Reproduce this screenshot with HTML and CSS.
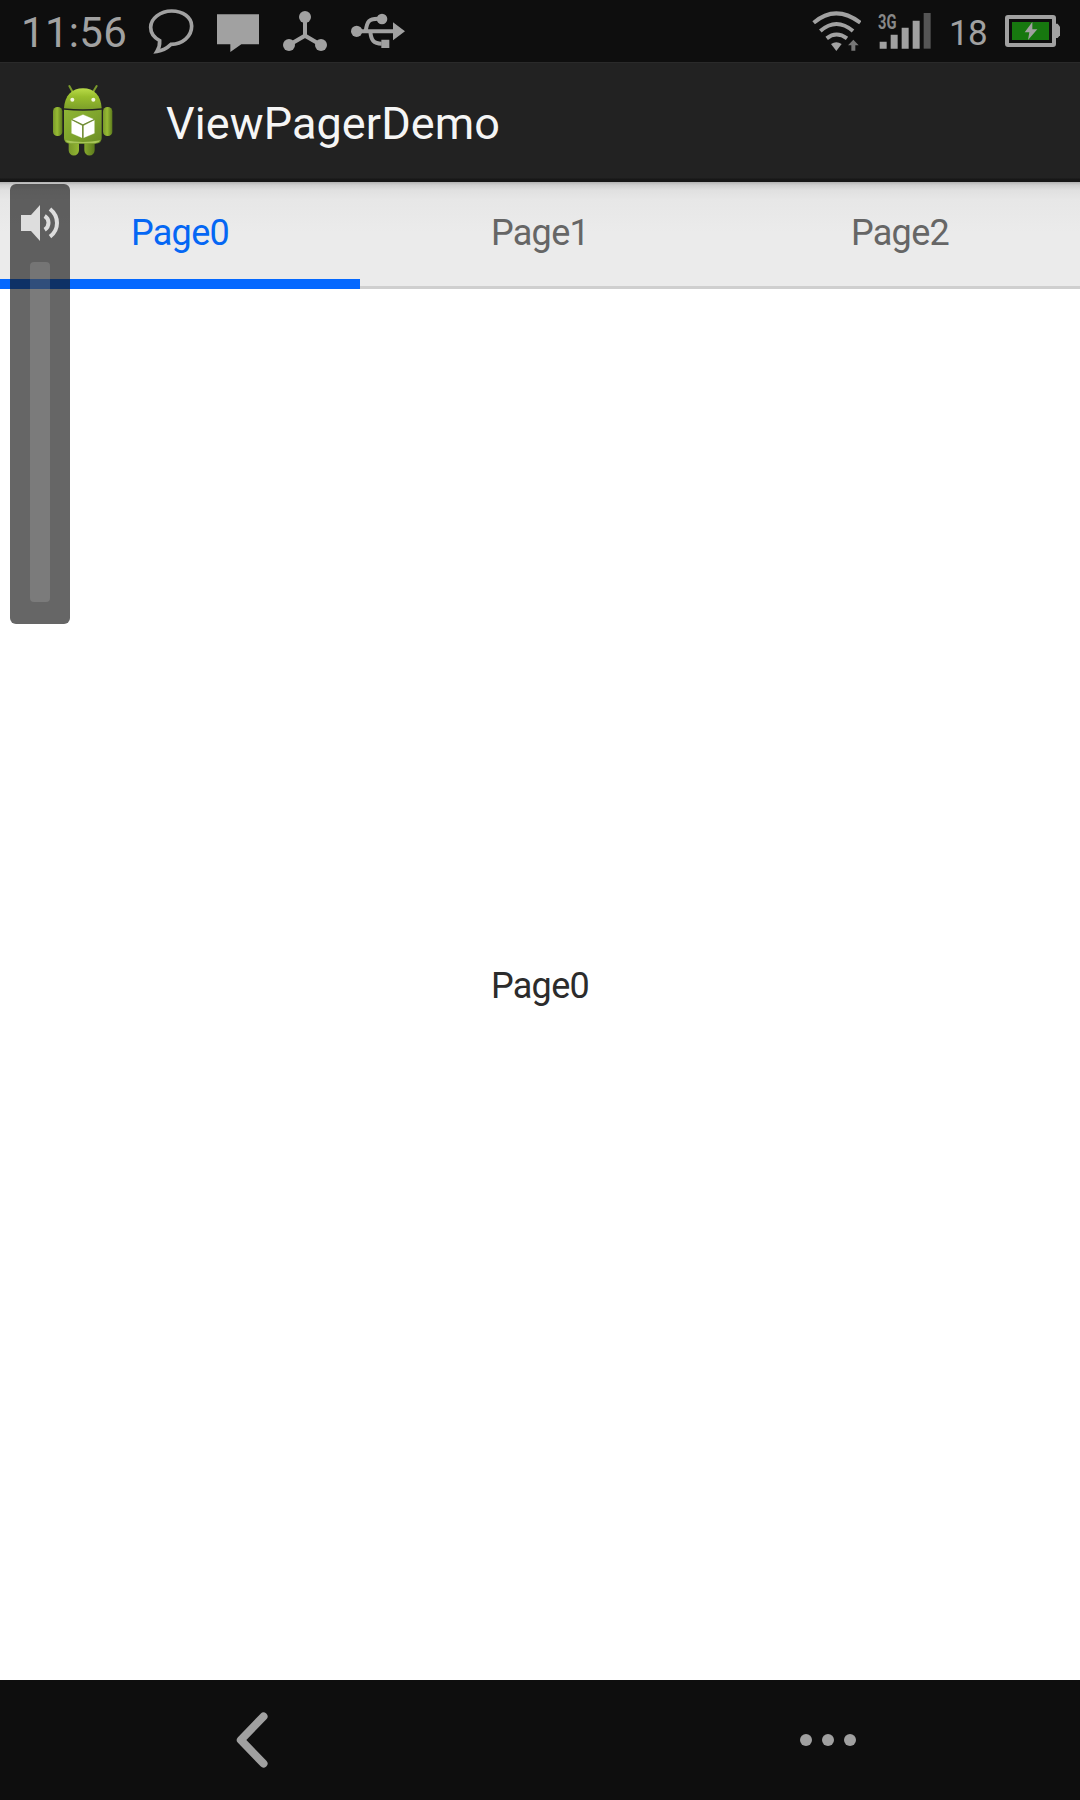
FILE: index.html
```html
<!DOCTYPE html>
<html lang="en">
<head>
<meta charset="utf-8">
<title>ViewPagerDemo</title>
<link rel="stylesheet" href="styles.css">
</head>
<body>
<div class="screen">
  <header class="status">
    <span class="clock">11:56</span>
    <svg class="chat" width="46" height="46" viewBox="0 0 138 138"><path d="M27 130Q36 116 35 98C18 89 8 76 8 58C8 32 37 9 71 9C105 9 131 28 131 54C131 86 103 109 69 109Q50 127 27 130Z" fill="none" stroke="#a1a1a1" stroke-width="11" stroke-linejoin="miter"/></svg>
    <svg class="message" width="42" height="38" viewBox="0 0 126 114"><path d="M0 1H126V91H73L40 114V91H0Z" fill="#a1a1a1"/></svg>
    <svg class="share" width="44" height="40" viewBox="0 0 132 120"><g fill="#a1a1a1"><circle cx="66" cy="18" r="18"/><circle cx="18" cy="102" r="18"/><circle cx="114" cy="102" r="18"/></g><path d="M66 18V73M18 102L66 74L114 102" fill="none" stroke="#a1a1a1" stroke-width="12"/></svg>
    <svg class="usb" width="54" height="36" viewBox="0 0 162 108"><g fill="#a1a1a1"><circle cx="17" cy="55" r="17"/><circle cx="93" cy="18" r="16"/><path d="M91 80H115V105H91ZM126 28L162 55L126 82Z"/></g><path d="M17 55H130M44 55C48 24 55 17 80 17M58 55C60 82 68 92 92 92" fill="none" stroke="#a1a1a1" stroke-width="12"/></svg>
    <span class="spacer"></span>
    <svg class="wifi" width="50" height="40" viewBox="0 0 150 120"><path d="M8 35Q74-21 148 35M28 60Q76 18 126 60M47 82Q76 59 108 82" fill="none" stroke="#a1a1a1" stroke-width="12"/><path d="M60 99Q76 89 92 99L76 120Z" fill="#a1a1a1"/><path d="M111 103L127 86L143 103H133V119H121V103Z" fill="#777"/></svg>
    <span class="signal"><span class="network">3G</span><svg width="54" height="38" viewBox="0 0 162 114"><path d="M8 92H29V113H8ZM41 71H62V113H41ZM74 50H95V113H74ZM107 29H128V113H107Z" fill="#a1a1a1"/><path d="M140 6H161V113H140Z" fill="#555"/></svg></span>
    <span class="charge">18</span>
    <svg class="battery" width="55" height="32" viewBox="0 0 165 96"><rect x="6" y="6" width="141" height="84" rx="3" fill="#0e0e0e" stroke="#a1a1a1" stroke-width="12"/><path d="M153 26H158L165 35V61L158 69H153Z" fill="#a1a1a1"/><path d="M21 21H132V75H21Z" fill="#17780f"/><path d="M82 21L59 52H73L69 75L97 43H82Z" fill="#a1a1a1"/></svg>
  </header>

  <div class="action-bar">
    <svg class="robot" width="62" height="72" viewBox="66 42 186 216">
      <defs>
        <linearGradient id="head" x1="0" y1="0" x2="0" y2="1"><stop offset="0" stop-color="#b9db48"/><stop offset=".4" stop-color="#98be2c"/><stop offset="1" stop-color="#7c9f2a"/></linearGradient>
        <linearGradient id="body" x1="0" y1="0" x2="1" y2="1"><stop offset="0" stop-color="#8fb536"/><stop offset=".5" stop-color="#7fa52c"/><stop offset="1" stop-color="#6b8c26"/></linearGradient>
        <linearGradient id="limb" x1="0" y1="0" x2="1" y2="0"><stop offset="0" stop-color="#78982a"/><stop offset=".45" stop-color="#97bb34"/><stop offset="1" stop-color="#5c7a1c"/></linearGradient>
      </defs>
      <path d="M118 48L128 66M200 48L189 66" stroke="#7b9b2c" stroke-width="6" stroke-linecap="round"/>
      <path d="M116 200H147V241A15 15 0 0 1 116 241ZM163 200H194V241A15 15 0 0 1 163 241Z" fill="url(#limb)"/>
      <rect x="69" y="111" width="28" height="87" rx="13" fill="url(#limb)"/>
      <rect x="219" y="111" width="28" height="87" rx="13" fill="url(#limb)"/>
      <path d="M102 115C104 76 126 55 159 55S213 76 215 115Q159 121 102 115Z" fill="url(#head)"/>
      <path d="M102 119Q159 125 215 119V204Q215 221 196 221H121Q102 221 102 204Z" fill="url(#body)"/>
      <path d="M106 211Q159 221 211 211Q207 219 196 220H121Q110 219 106 211Z" fill="#a9c65a"/>
      <circle cx="127" cy="89" r="6" fill="#f2f6dc"/><circle cx="190" cy="89" r="6" fill="#f2f6dc"/>
      <path d="M127 148L159 134L191 148L159 163ZM125 151L156 167V203L125 190ZM193 151L161 167V203L193 190Z" fill="#fff" stroke="#fff" stroke-width="1"/>
      <path d="M126 149L158.500 165L192 149M158.500 165V203" fill="none" stroke="#6b813a" stroke-width="3"/>
    </svg>
    <h1 class="title">ViewPagerDemo</h1>
  </div>

  <nav class="tabs">
    <span class="tab selected">Page0</span>
    <span class="tab">Page1</span>
    <span class="tab">Page2</span>
  </nav>

  <main class="page"><span class="page-label">Page0</span></main>

  <footer class="soft-keys">
    <svg class="back" width="32" height="56" viewBox="0 0 32 56"><path d="M27.500 4.500L4.800 28L27.500 51.500" fill="none" stroke="#a0a0a0" stroke-width="8" stroke-linecap="round" stroke-linejoin="round"/></svg>
    <span class="more"><i></i><i></i><i></i></span>
  </footer>

  <div class="volume">
    <svg width="38" height="36" viewBox="0 0 114 108"><path d="M0 30H30L57 0V108L30 78H0Z" fill="#ddd"/><path d="M71 33A24 24 0 0 1 71 74M87 12Q108 29 108 54T87 95" fill="none" stroke="#ddd" stroke-width="12"/></svg>
    <div class="track"></div>
  </div>
</div>
</body>
</html>
```
FILE: styles.css
```css
* { box-sizing: border-box; }
body { margin: 0; font-family: Roboto, "Liberation Sans", sans-serif; }
svg { display: block; flex: none; }

.screen {
  position: relative;
  display: flex;
  flex-direction: column;
  width: 1080px;
  height: 1800px;
  overflow: hidden;
  background: #fff;
}

.status {
  display: flex;
  align-items: flex-start;
  flex: none;
  height: 62px;
  padding: 0 20px 0 21px;
  background: #0e0e0e;
  color: #a1a1a1;
}
.clock { width: 127px; padding-top: 9px; font-size: 42px; line-height: 48px; letter-spacing: .3px; }
.chat { margin-top: 8px; }
.message { margin: 14px 0 0 23px; }
.share { margin: 11px 0 0 24px; }
.usb { margin: 13px 0 0 24px; }
.spacer { flex: 1; }
.wifi { margin: 11px 16px 0 0; }
.signal { position: relative; margin: 11px 18px 0 0; }
.network { position: absolute; left: 1px; top: 1px; font-size: 21px; line-height: 20px; font-weight: 700; color: #888; transform: scaleX(.7); transform-origin: 0 0; }
.charge { width: 56px; padding: 13px 0 0 0; font-size: 35px; line-height: 42px; letter-spacing: -.6px; }
.battery { margin-top: 15px; }

.action-bar {
  display: flex;
  align-items: flex-start;
  flex: none;
  height: 120px;
  padding: 22px 0 0 52px;
  background: linear-gradient(#2a2a2a 0 1px, #222 1px 116px, #171717 117px);
  color: #f5f5f5;
}
.title { margin: 10px 0 0 52px; font-size: 45px; line-height: 60px; font-weight: 400; letter-spacing: .1px; }

.tabs {
  display: grid;
  grid-template-columns: repeat(3, 1fr);
  flex: none;
  height: 107px;
  background: linear-gradient(#b2b2b2, #cfcfcf 3px, #e0e0e0 8px, #e7e7e7 18px, #ebebeb 50px);
}
.tab {
  padding-top: 30px;
  border-bottom: 3px solid #cfcfcf;
  color: #666;
  font-size: 36px;
  line-height: 42px;
  letter-spacing: -.7px;
  text-align: center;
}
.selected { border-bottom: 10px solid #0468ff; color: #0567f4; }

.page { display: flex; align-items: center; justify-content: center; flex: 1; padding-top: 3px; }
.page-label { color: #2c2c2c; font-size: 36px; line-height: 42px; letter-spacing: -.7px; }

.soft-keys {
  display: flex;
  align-items: center;
  justify-content: space-between;
  flex: none;
  height: 120px;
  padding: 0 224px 0 236px;
  background: #0e0e0e;
}
.more { display: flex; gap: 10px; }
.more i { width: 12px; height: 12px; border-radius: 50%; background: #a0a0a0; }

.volume {
  position: absolute;
  left: 10px;
  top: 184px;
  width: 60px;
  height: 440px;
  padding: 21px 0 0 11px;
  border-radius: 6px;
  background: rgba(20, 20, 20, .65);
}
.track { width: 20px; height: 340px; margin: 21px 0 0 9px; border-radius: 4px; background: rgba(255, 255, 255, .14); }
```
